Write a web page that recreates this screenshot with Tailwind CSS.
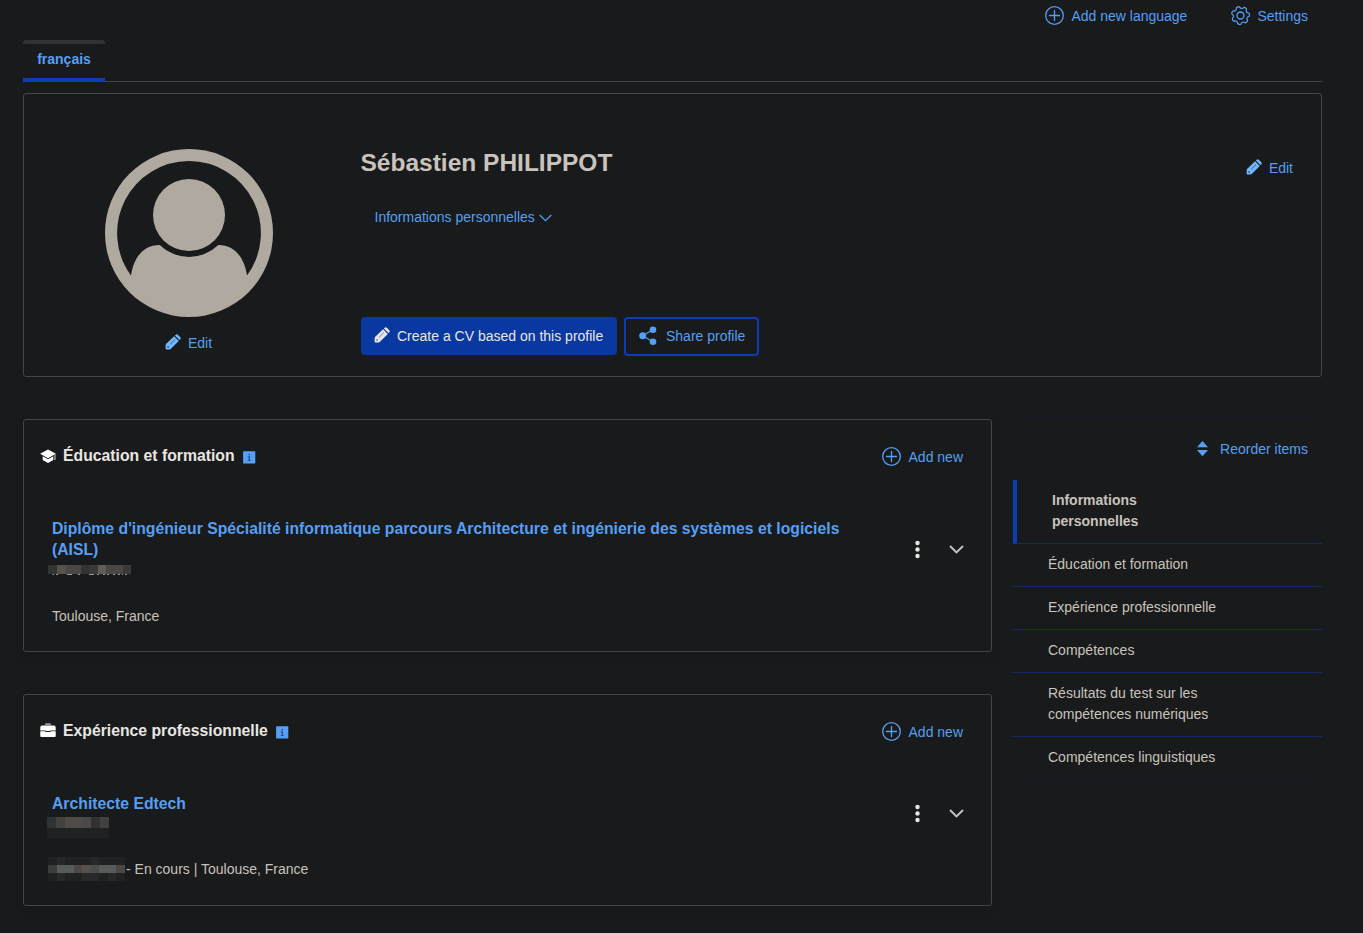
<!DOCTYPE html>
<html lang="fr">
<head>
<meta charset="utf-8">
<title>Profile</title>
<script src="https://cdn.jsdelivr.net/npm/@tailwindcss/browser@4"></script>
</head>
<body class="bg-[#191a1b] text-[#c8c3bc] text-[14px] leading-[21px] font-['Liberation_Sans',Arial,sans-serif] h-[933px] overflow-hidden">
<svg class="hidden">
  <symbol id="plus" viewBox="0 0 20 20"><g fill="none" stroke="currentColor" stroke-width="1.3"><circle cx="9.500" cy="9.500" r="8.800"/><path d="M9.500 4.500V14.500M4.500 9.500H14.500" stroke-linecap="round"/></g></symbol>
  <symbol id="pencil" viewBox="0 0 16 16"><path fill="currentColor" fill-rule="evenodd" d="M1 10.100L9.100 2.200 13.800 6.900 5.700 14.900 4.500 15.500H1.500Q.6 15.500.6 14.600V11.500ZM2.300 13a.8.800 0 1 0 1.600 0 .8.800 0 1 0-1.600 0ZM5.200 10.500L10.200 5.500 9.900 5.200 4.900 10.200ZM9.900 1.500L10.700.7Q11.800-.1 12.800.7L15.300 3.200Q16 4.200 15.400 5.200L14.500 6.100Z"/></symbol>
  <symbol id="info" viewBox="0 0 13 13"><rect x=".1" y=".3" width="12.200" height="12.200" rx=".5" fill="#569ff7"/><path d="M5.400 3H7V4.300H5.400ZM4.700 5.300H7V9.200H8V10.100H4.600V9.200H5.600V6.200H4.700Z" fill="#2f4f78"/></symbol>
  <symbol id="dots" viewBox="0 0 6 18"><g fill="#e8e6e3"><circle cx="3.500" cy="2" r="2.200"/><circle cx="3.500" cy="8.500" r="2.200"/><circle cx="3.500" cy="15" r="2.200"/></g></symbol>
  <symbol id="chev" viewBox="0 0 16 10"><path d="M2 1L8.500 7.500 15 1" fill="none" stroke="currentColor" stroke-width="1.900"/></symbol>
  <symbol id="tooth" viewBox="-10 -10 20 20"><path d="M-3.040-6.310Q-2.140-6.740-1.900-7.900Q-1.600-9.100 0-9.100Q1.600-9.100 1.900-7.900Q2.140-6.740 3.040-6.310"/></symbol>
</svg>
<main class="ml-[23px] w-[1299px]">
  <header class="flex h-[40px] justify-end pr-[14px] text-[#559ff3]">
    <a class="flex h-[31px] items-center"><svg class="mr-[6px] h-5 w-5"><use href="#plus"/></svg><span class="pt-px">Add new language</span></a>
    <a class="ml-[44px] flex h-[31px] items-center"><svg class="mr-[6px] h-5 w-5" viewBox="0 0 20 20" fill="none" stroke="currentColor" stroke-width="1.300"><circle cx="9.500" cy="9.500" r="3.500"/><g transform="translate(9.500 9.500) rotate(-18)"><use href="#tooth" x="-10" y="-10" width="20" height="20"/><use href="#tooth" x="-10" y="-10" width="20" height="20" transform="rotate(51.430)"/><use href="#tooth" x="-10" y="-10" width="20" height="20" transform="rotate(102.860)"/><use href="#tooth" x="-10" y="-10" width="20" height="20" transform="rotate(154.290)"/><use href="#tooth" x="-10" y="-10" width="20" height="20" transform="rotate(205.710)"/><use href="#tooth" x="-10" y="-10" width="20" height="20" transform="rotate(257.140)"/><use href="#tooth" x="-10" y="-10" width="20" height="20" transform="rotate(308.570)"/></g></svg><span class="pt-px">Settings</span></a>
  </header>
  <nav class="flex h-[42px] items-end">
    <a class="flex h-[42px] w-[82px] items-center justify-center rounded-t-[3px] border-t-4 border-b-4 border-t-[#303233] border-b-[#0c3db2] pb-[3px] font-bold text-[#559ff3]">français</a>
    <div class="h-px flex-1 bg-[#414445]"></div>
  </nav>

  <section class="mt-[11px] flex h-[284px] rounded-[3px] border border-[#434647]">
    <div class="flex w-[330px] flex-col items-center pt-[55px]">
      <svg class="h-[168px] w-[168px]" viewBox="0 0 168 168"><path fill="#b0a99f" fill-rule="evenodd" d="M84 0a84 84 0 1 0 0 168A84 84 0 1 0 84 0ZM84 12A72 72 0 0 1 142 126.500C140 112 132 96 113.300 96A42 42 0 0 1 54.700 96C36 96 28 112 26 126.500A72 72 0 0 1 84 12Z"/><circle cx="84" cy="66" r="36" fill="#b0a99f"/></svg>
      <a class="mt-[15px] mr-px flex items-center text-[#559ff3]"><svg class="mr-[7px] mb-[2px] h-4 w-4 text-[#71b7ff]"><use href="#pencil"/></svg><span class="pt-px">Edit</span></a>
    </div>
    <div class="flex flex-1 flex-col pl-[6.5px]">
      <h1 class="mt-[51px] text-[24.5px] leading-[36px] font-bold">Sébastien PHILIPPOT</h1>
      <a class="mt-[26px] ml-[14px] flex items-center text-[#559ff3]">Informations personnelles<svg class="ml-[4px] h-[8px] w-[13px]" viewBox="0 0 13 8" fill="none" stroke="currentColor" stroke-width="1.200"><path d="M.7 1L6.500 6.600 12.300 1"/></svg></a>
      <div class="mt-[89px] ml-[0.5px] flex gap-[7px]">
        <a class="flex h-[38px] w-[256px] items-center rounded-[4px] bg-[#0a38a1] pl-[13px] text-[#e8e6e3]"><svg class="mr-[7px] mb-[2px] h-4 w-4"><use href="#pencil"/></svg>Create a CV based on this profile</a>
        <a class="flex h-[39px] w-[135px] items-center rounded-[4px] border-2 border-[#0c3db2] pl-[12px] text-[#559ff3]"><svg class="mr-[8px] mb-[2px] h-5 w-5" viewBox="0 0 20 20" fill="currentColor"><circle cx="4.700" cy="9.700" r="3.500"/><circle cx="15" cy="3.700" r="3.300"/><circle cx="15" cy="15.700" r="3.300"/><path d="M15 3.700L4.500 9.700L15 15.700" fill="none" stroke="currentColor" stroke-width="1.200"/></svg>Share profile</a>
      </div>
    </div>
    <a class="mt-[63px] mr-[28px] flex h-[21px] items-center text-[#559ff3]"><svg class="mr-[7px] mb-[2px] h-4 w-4 text-[#71b7ff]"><use href="#pencil"/></svg><span class="pt-px">Edit</span></a>
  </section>

  <div class="mt-[42px] flex items-start gap-[21px]">
    <div class="w-[969px]">
      <section class="h-[233px] rounded-[3px] border border-[#434647] shadow-[0_4px_12px_rgba(0,0,0,0.08)]">
        <div class="mt-[25px] flex h-[24px] items-center pl-[16px] pr-[28px]">
          <svg class="mb-[3px] h-4 w-4" viewBox="0 0 16 16"><path fill="#fff" d="M8 1.400L15.900 5.700 8 10.200.1 5.700ZM2.700 8.300L8 11.200 13.300 8.300V12L8 14.900 2.700 12Z"/><path fill="#999" d="M14.200 6.800L15.700 6V12H14.200Z"/></svg>
          <h2 class="mb-[3px] ml-[7px] text-[15.75px] font-bold text-[#e8e6e3]">Éducation et formation</h2>
          <svg class="mt-px ml-[8px] h-[13px] w-[13px]"><use href="#info"/></svg>
          <a class="ml-auto flex items-center text-[#559ff3]"><svg class="mr-[7px] h-5 w-5"><use href="#plus"/></svg><span class="pt-px">Add new</span></a>
        </div>
        <div class="mt-[49px] flex items-center pl-[28px] pr-[27px]">
          <h3 class="w-[800px] text-[15.75px] font-bold text-[#559ff3]">Diplôme d'ingénieur Spécialité informatique parcours Architecture et ingénierie des systèmes et logiciels<br>(AISL)</h3>
          <svg class="mt-[21px] ml-auto h-[18px] w-[6px]"><use href="#dots"/></svg>
          <svg class="mt-[21px] ml-[28px] h-[10px] w-4"><use href="#chev"/></svg>
        </div>
        <svg class="mt-[5px] ml-[24px] h-[10px] w-[83px]" viewBox="0 0 83 10"><path fill="#323333" d="M0 0H9V9H0ZM33 0H42V9H33Z"/><path fill="#56524c" d="M9 0H18V9H9Z"/><path fill="#4a4744" d="M18 0H33V9H18ZM58 0H75V9H58Z"/><path fill="#3c3a39" d="M42 0H50V9H42ZM75 0H83V9H75Z"/><path fill="#5f5c53" d="M50 0H58V9H50Z"/><path d="M4.500 9.500H6M8 9.500H10M19 9.500H24M30 9.500H32M41 9.500H46M49 9.500H51M55 9.500H57M59 9.500H61M65 9.500H67M70 9.500H72M74 9.500H75M77 9.500H79" stroke="#a09689" stroke-width="1"/></svg>
        <p class="mt-[31px] ml-[28px]">Toulouse, France</p>
      </section>

      <section class="mt-[42px] h-[212px] rounded-[3px] border border-[#434647] shadow-[0_4px_12px_rgba(0,0,0,0.08)]">
        <div class="mt-[25px] flex h-[24px] items-center pl-[16px] pr-[28px]">
          <svg class="mb-[5px] h-4 w-4" viewBox="0 0 16 16"><path fill="#fff" d="M2 3.500H14Q15.700 3.700 15.700 5.500V8.400H10V9H6V8.400H.3V5.500Q.3 3.700 2 3.500ZM.3 9.200H5.500V10H10.500V9.200H15.700V14Q15.700 15 14.700 15H1.300Q.3 15 .3 14Z"/><path fill="#999" d="M5 3.700V2.500Q5 1.300 6.200 1.300H9.800Q11 1.300 11 2.500V3.700Z"/></svg>
          <h2 class="mb-[3px] ml-[7px] text-[15.75px] font-bold text-[#e8e6e3]">Expérience professionnelle</h2>
          <svg class="mt-px ml-[8px] h-[13px] w-[13px]"><use href="#info"/></svg>
          <a class="ml-auto flex items-center text-[#559ff3]"><svg class="mr-[7px] h-5 w-5"><use href="#plus"/></svg><span class="pt-px">Add new</span></a>
        </div>
        <div class="mt-[49px] flex h-[21px] items-center pl-[28px] pr-[27px]">
          <h3 class="text-[15.75px] font-bold text-[#559ff3]">Architecte Edtech</h3>
          <svg class="mt-[20px] ml-auto h-[18px] w-[6px]"><use href="#dots"/></svg>
          <svg class="mt-[20px] ml-[28px] h-[10px] w-4"><use href="#chev"/></svg>
        </div>
        <svg class="mt-[3px] ml-[23px] h-[21px] w-[62px]" viewBox="0 0 62 21"><path fill="#202221" d="M0 11H62V21H0Z"/><path fill="#2f3334" d="M0 0H9V11H0Z"/><path fill="#43413f" d="M9 0H18V11H9ZM53 0H62V11H53Z"/><path fill="#4e4c46" d="M18 0H35V11H18Z"/><path fill="#4b4947" d="M35 0H44V11H35Z"/><path fill="#323131" d="M44 0H53V11H44Z"/></svg>
        <div class="mt-[19px] ml-[24px] flex h-[24px] items-center">
          <svg class="mr-px h-[24px] w-[77px]" viewBox="0 0 77 24"><path fill="#202222" d="M0 0H77V24H0Z"/><path fill="#272827" d="M9 0H17V8H9ZM43 0H51V8H43ZM9 16H17V24H9ZM34 16H51V24H34ZM60 16H68V24H60Z"/><path fill="#3b3d3c" d="M0 8H9V16H0Z"/><path fill="#595b5a" d="M9 8H26V16H9ZM51 8H68V16H51Z"/><path fill="#4b4744" d="M26 8H34V16H26ZM68 8H77V16H68Z"/><path fill="#55514c" d="M34 8H43V16H34Z"/><path fill="#4a4c4e" d="M43 8H51V16H43Z"/></svg>
          <span>- En cours | Toulouse, France</span>
        </div>
      </section>
    </div>

    <aside class="h-[361px] w-[309px] rounded-[8px] shadow-[0_0_3px_rgba(10,49,110,0.5)]">
      <a class="mt-[20px] mr-[14px] flex items-center justify-end text-[#559ff3]"><svg class="mr-[12px] mb-[2px] h-[16px] w-[11px]" viewBox="0 0 11 16" fill="currentColor"><path d="M5.500 0L11 6.300H0ZM0 8.900H11L5.500 15.300Z"/></svg>Reorder items</a>
      <ul class="mt-[20px]">
        <li class="border-b border-[#132c69] border-l-4 border-l-[#0c3db2] pt-[10px] pb-[11px] pl-[35px] font-bold">Informations<br>personnelles</li>
        <li class="border-b border-[#132c69] pt-[10px] pb-[11px] pl-[35px]">Éducation et formation</li>
        <li class="border-b border-[#132c69] pt-[10px] pb-[11px] pl-[35px]">Expérience professionnelle</li>
        <li class="border-b border-[#132c69] pt-[10px] pb-[11px] pl-[35px]">Compétences</li>
        <li class="border-b border-[#132c69] pt-[10px] pb-[11px] pl-[35px]">Résultats du test sur les<br>compétences numériques</li>
        <li class="pt-[10px] pb-[11px] pl-[35px]">Compétences linguistiques</li>
      </ul>
    </aside>
  </div>
</main>
</body>
</html>
